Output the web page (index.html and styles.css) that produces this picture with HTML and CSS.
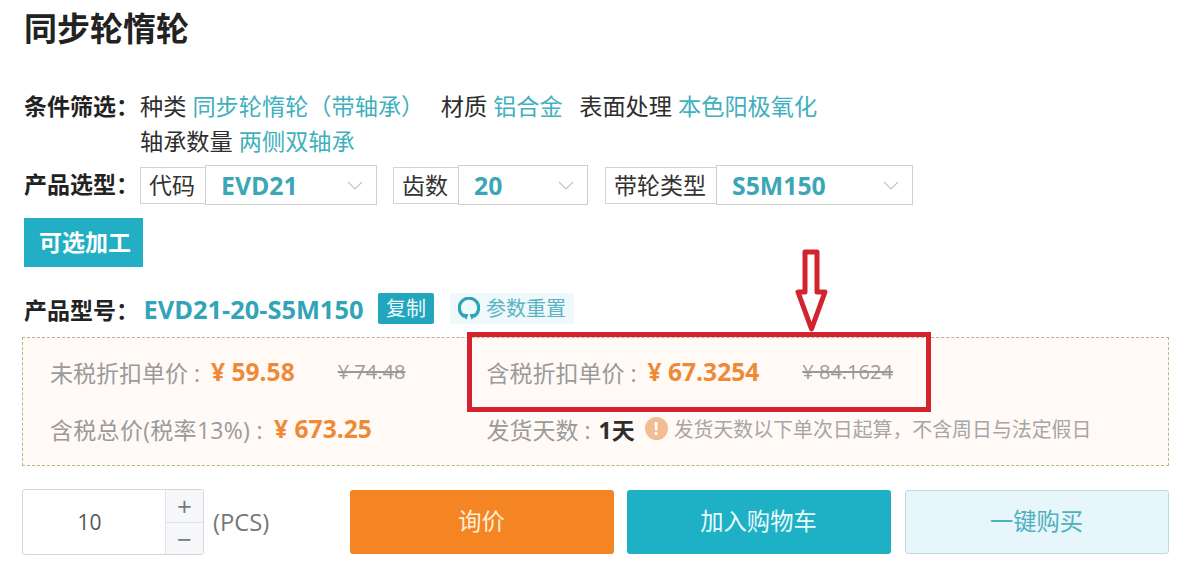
FILE: index.html
```html
<!DOCTYPE html>
<html lang="zh-CN">
<head>
<meta charset="utf-8">
<title>同步轮惰轮</title>
<link rel="stylesheet" href="styles.css">
</head>
<body>
<main class="page">
  <h1 class="title">同步轮惰轮</h1>

  <section class="filter">
    <div class="label">条件筛选：</div>
    <div class="filter-body">
      <div class="filter-line">
        <span class="item">种类 <a class="val">同步轮惰轮（带轴承）</a></span>
        <span class="item">材质 <a class="val">铝合金</a></span>
        <span class="item">表面处理 <a class="val">本色阳极氧化</a></span>
      </div>
      <div class="filter-line">
        <span class="item">轴承数量 <a class="val">两侧双轴承</a></span>
      </div>
    </div>
  </section>

  <section class="selectors">
    <div class="label">产品选型：</div>
    <div class="sel sel-a">
      <span class="sel-name">代码</span>
      <span class="sel-box w172"><b>EVD21</b><svg class="chev" viewBox="0 0 16 9"><path d="M1 1l7 7 7-7"/></svg></span>
    </div>
    <div class="sel sel-b">
      <span class="sel-name">齿数</span>
      <span class="sel-box w130"><b>20</b><svg class="chev" viewBox="0 0 16 9"><path d="M1 1l7 7 7-7"/></svg></span>
    </div>
    <div class="sel sel-c">
      <span class="sel-name">带轮类型</span>
      <span class="sel-box w197"><b>S5M150</b><svg class="chev" viewBox="0 0 16 9"><path d="M1 1l7 7 7-7"/></svg></span>
    </div>
  </section>

  <button class="opt-btn">可选加工</button>

  <section class="model">
    <div class="label">产品型号：</div>
    <span class="model-no">EVD21-20-S5M150</span>
    <span class="copy">复制</span>
    <span class="reset">
      <svg class="reset-ico" viewBox="1 1 18 19"><path d="M6.600 17.200A8 8 0 1 1 13.400 17.200"/><path class="fill" d="M3.600 14.600l5.800.6-1.600 4.600zM16.400 14.600l-5.800.6 1.600 4.600z"/></svg>
      参数重置
    </span>
  </section>

  <section class="panel">
    <div class="cell">
      <span class="k">未税折扣单价 : </span><span class="p">¥ 59.58</span><span class="old">¥ 74.48</span>
    </div>
    <div class="cell">
      <span class="k">含税折扣单价 : </span><span class="p">¥ 67.3254</span><span class="old">¥ 84.1624</span>
    </div>
    <div class="cell">
      <span class="k k-wide">含税总价(税率13%) : </span><span class="p">¥ 673.25</span>
    </div>
    <div class="cell">
      <span class="k">发货天数 : </span><b class="days">1天</b>
      <span class="warn">!</span>
      <span class="note">发货天数以下单次日起算，不含周日与法定假日</span>
    </div>
  </section>

  <section class="actions">
    <div class="qty">
      <span class="qty-val">10</span>
      <div class="steps"><span class="step">+</span><span class="step">−</span></div>
    </div>
    <span class="unit">(PCS)</span>
    <button class="btn orange">询价</button>
    <button class="btn teal">加入购物车</button>
    <button class="btn pale">一键购买</button>
  </section>
</main>

<div class="red-box"></div>
<svg class="red-arrow" viewBox="0 0 34 84"><path d="M10 3h12v40h8L16.500 80 3 43h7z"/></svg>
</body>
</html>
```

FILE: styles.css
```css
* { box-sizing: border-box; }
html, body { margin: 0; padding: 0; background: #fff; }
body {
  width: 1189px;
  height: 576px;
  overflow: hidden;
  position: relative;
  font-family: "Open Sans", "Noto Sans CJK SC", sans-serif;
  color: #2b2b2b;
}
.page { padding: 0 20px 0 24px; }
.title {
  margin: 0;
  height: 62px;
  padding-top: 7px;
  font-size: 33px;
  line-height: 44px;
  font-weight: 700;
  color: #222;
}
.label {
  font-size: 23px;
  font-weight: 700;
  color: #222;
  white-space: nowrap;
  flex: none;
}
.filter {
  display: flex;
  margin-top: 27px;
  font-size: 23.200px;
  line-height: 35px;
}
.filter .label { width: 116px; line-height: 35px; }
.filter-line { display: flex; gap: 16.500px; }
.item { white-space: nowrap; color: #2e2e2e; }
.val { color: #3fb0bd; }
.selectors {
  display: flex;
  align-items: center;
  margin-top: 6px;
  height: 40px;
}
.selectors .label { width: 116px; margin-top: -4px; }
.sel { display: flex; align-items: center; }
.sel-b { margin-left: 16px; }
.sel-c { margin-left: 17px; }
.sel-name {
  height: 37px;
  padding: 0 10px 0 8px;
  border: 1px solid #d4d4d4;
  border-right: 0;
  font-size: 23px;
  line-height: 35px;
  color: #333;
}
.sel-box {
  height: 40px;
  border: 1px solid #cfcfcf;
  display: flex;
  align-items: center;
  justify-content: space-between;
  padding: 0 13px 0 15px;
  font-size: 24.800px;
  color: #3ba6b6;
}
.sel-box b { font-weight: 700; }
.w172 { width: 172px; }
.w130 { width: 130px; }
.w197 { width: 197px; }
.chev { width: 16px; height: 9px; fill: none; stroke: #c4c4c4; stroke-width: 1.200; }
.opt-btn {
  display: block;
  margin-top: 13px;
  width: 119px;
  height: 49px;
  border: 0;
  background: #22aec4;
  color: #fff;
  font-family: inherit;
  font-size: 23px;
  line-height: 47px;
  font-weight: 700;
  padding: 0 0 0 3px;
}
.model {
  display: flex;
  align-items: center;
  margin-top: 26px;
  height: 31px;
}
.model .label { width: 119.500px; }
.model-no { font-size: 25.400px; font-weight: 700; color: #32a4b7; width: 234.500px; white-space: nowrap; }
.copy {
  width: 56px;
  height: 31px;
  background: #21a6bd;
  color: #e9f8fb;
  font-size: 20px;
  line-height: 31px;
  text-align: center;
  border-radius: 2px;
}
.reset {
  margin-left: 16px;
  width: 124px;
  height: 31px;
  background: #eff8fa;
  color: #59b4c2;
  font-size: 20px;
  line-height: 31px;
  display: flex;
  align-items: center;
  gap: 6px;
  padding-left: 8px;
  white-space: nowrap;
}
.reset-ico { width: 22px; height: 23px; fill: none; stroke: #2ba4b8; stroke-width: 2.600; flex: none; }
.reset-ico .fill { fill: #2ba4b8; stroke: none; }
.panel {
  margin: 13px 0 0 -2px;
  width: 1147px;
  height: 129px;
  border: 1px dashed #c2b28e;
  background: #fffaf6;
  display: grid;
  grid-template-columns: 436.500px 1fr;
  grid-template-rows: 57px 57px;
  padding: 5px 0 0 27px;
}
.cell { display: flex; align-items: center; white-space: nowrap; font-size: 23px; color: #9a9a9a; }
.k { white-space: pre; }
.k-wide { letter-spacing: .3px; }
.p { color: #ee8a37; font-weight: 700; font-size: 24.600px; margin-left: 5px; }
.old { color: #999; font-size: 20px; text-decoration: line-through; margin-left: 43px; }
.days { color: #2e2e2e; font-size: 23px; margin-left: 2px; }
.warn {
  width: 23px;
  height: 23px;
  border-radius: 50%;
  background: #f2bd93;
  color: #fff;
  font-size: 17px;
  font-weight: 700;
  line-height: 23px;
  text-align: center;
  margin: 0 6px 0 10px;
}
.note { font-size: 19.900px; color: #a6a6a6; }
.actions {
  margin: 23px 0 0 -2px;
  display: flex;
  align-items: center;
  height: 66px;
}
.qty {
  width: 182px;
  height: 66px;
  border: 1px solid #d6d6d6;
  border-radius: 3px;
  display: flex;
  background: #fff;
}
.qty-val {
  width: 142px;
  padding-right: 9px;
  text-align: center;
  font-size: 21px;
  line-height: 64px;
  color: #555;
}
.steps {
  flex: 1;
  display: flex;
  flex-direction: column;
  background: #f6f7fa;
  border-left: 1px solid #e4e4e4;
}
.step {
  flex: 1;
  text-align: center;
  font-size: 26px;
  line-height: 32px;
  color: #777;
}
.step + .step { border-top: 1px solid #e2e2e2; }
.unit { margin-left: 9px; width: 137px; font-size: 23.800px; color: #777; }
.btn {
  width: 264px;
  height: 64px;
  border: 0;
  border-radius: 3px;
  font-family: inherit;
  font-size: 23.300px;
  padding: 0 1px 4px 0;
}
.btn + .btn { margin-left: 13px; }
.btn.pale { margin-left: 14px; }
.orange { background: #f58423; color: #fdf0dc; }
.teal { background: #1eb0c5; color: #e8fbfd; }
.pale { background: #e6f6fb; border: 1px solid #bcd9e3; color: #4fb0be; }
.red-box {
  position: absolute;
  left: 467px;
  top: 332px;
  width: 464px;
  height: 80px;
  border: 5px solid #d2232f;
}
.red-arrow {
  position: absolute;
  left: 795px;
  top: 249px;
  width: 34px;
  height: 84px;
  fill: none;
  stroke: #d2232f;
  stroke-width: 5;
  stroke-linejoin: round;
}
```
